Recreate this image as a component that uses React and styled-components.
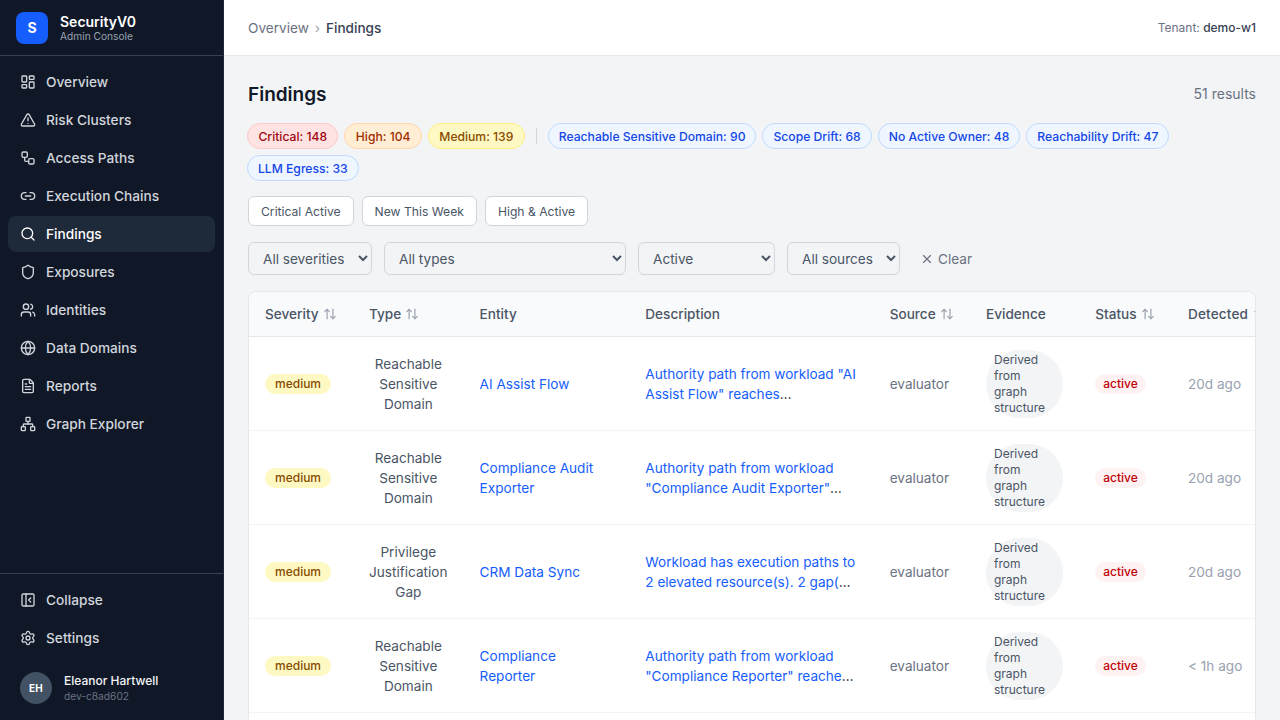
import React from 'react';
import styled, { createGlobalStyle } from 'styled-components';
import {
  LayoutDashboard, TriangleAlert, Workflow, Link2, Search, Shield, Users, Globe,
  FileText, Network, PanelLeftClose, Settings, ArrowUpDown, X,
} from 'lucide-react';

const Global = createGlobalStyle`
  * { box-sizing: border-box; }
  html, body { margin: 0; height: 100%; overflow: hidden; }
  body { font-family: Inter, "Liberation Sans", sans-serif; background: #f3f4f6; color: #101828; }
`;

const Shell = styled.div`display: flex; height: 100vh; overflow: hidden;`;

const Sidebar = styled.aside`
  width: 224px; flex: none; display: flex; flex-direction: column;
  background: #101828; border-right: 1px solid #1e2939;
`;
const Brand = styled.div`
  height: 56px; flex: none; display: flex; align-items: center; gap: 12px; padding: 0 16px;
  border-bottom: 1px solid #364153;
`;
const Logo = styled.div`
  width: 32px; height: 32px; border-radius: 8px; background: #155dfc; color: #fff;
  display: flex; align-items: center; justify-content: center; font-size: 14px; font-weight: 700;
`;
const BrandText = styled.div`display: flex; flex-direction: column;`;
const BrandName = styled.span`font-size: 14px; line-height: 16px; font-weight: 600; color: #fff;`;
const BrandSub = styled.span`font-size: 10.2px; line-height: 12px; color: #99a1af;`;
const Nav = styled.nav`flex: 1; display: flex; flex-direction: column; gap: 2px; padding: 8px 8px 0 8px;`;
const NavItem = styled.a`
  height: 36px; display: flex; align-items: center; gap: 10px; padding: 0 12px; border-radius: 8px;
  font-size: 13.7px; font-weight: 500; color: ${p => (p.$active ? '#fff' : '#d1d5dc')};
  background: ${p => (p.$active ? '#1e2939' : 'transparent')};
  svg { flex: none; }
`;
const SideFoot = styled.div`
  border-top: 1px solid #364153; padding: 8px 8px 16px; display: flex; flex-direction: column; gap: 2px;
`;
const UserRow = styled.div`display: flex; align-items: center; gap: 12px; padding: 0 12px; margin-top: 14px;`;
const Avatar = styled.div`
  width: 32px; height: 32px; border-radius: 50%; background: #425264; color: #fff;
  display: flex; align-items: center; justify-content: center; font-size: 10px; font-weight: 700; letter-spacing: .2px;
`;
const UserText = styled.div`display: flex; flex-direction: column;`;
const UserName = styled.span`font-size: 12px; line-height: 16px; font-weight: 500; color: #f3f4f6;`;
const UserId = styled.span`font-size: 10.2px; line-height: 14px; color: #6a7282;`;

const Main = styled.div`flex: 1; min-width: 0; display: flex; flex-direction: column;`;
const TopBar = styled.header`
  height: 56px; flex: none; background: #fff; border-bottom: 1px solid #e5e7eb;
  display: flex; align-items: center; justify-content: space-between; padding: 0 24px;
`;
const Crumbs = styled.div`display: flex; align-items: center; gap: 6px; font-size: 13.6px; color: #6a7282;`;
const CrumbSep = styled.span`color: #99a1af; font-size: 13.6px;`;
const CrumbNow = styled.span`color: #364153; font-weight: 500;`;
const Tenant = styled.div`font-size: 12px; color: #6a7282;`;
const TenantName = styled.span`color: #364153; font-weight: 500;`;

const Content = styled.main`flex: 1; min-height: 0; overflow: hidden; padding: 24px;`;
const TitleRow = styled.div`display: flex; align-items: center; justify-content: space-between; height: 28px; margin-bottom: 15px;`;
const Title = styled.h1`margin: 0; padding-top: 2px; font-size: 19px; line-height: 28px; font-weight: 600; color: #101828;`;
const Count = styled.span`padding-bottom: 2px; font-size: 14px; color: #6a7282;`;

const Chips = styled.div`display: flex; flex-wrap: wrap; align-items: center; gap: 6px; margin-left: -1px; margin-bottom: 15px;`;
const tones = {
  critical: ['#ffe2e2', '#ffc9c9', '#9f0712'],
  high: ['#ffedd4', '#ffd6a8', '#9f2d00'],
  medium: ['#fef9c2', '#fff085', '#894b00'],
  type: ['#eff6ff', '#bedbff', '#1447e6'],
};
const Chip = styled.span`
  height: 26px; display: inline-flex; align-items: center; border-radius: 999px;
  padding: 0 ${p => (p.$tone === 'type' ? 10 : 10.4)}px;
  font-size: 12.15px; font-weight: 500; white-space: nowrap;
  border: 1px solid ${p => tones[p.$tone][1]};
  background: ${p => tones[p.$tone][0]}; color: ${p => tones[p.$tone][2]};
`;
const ChipDivider = styled.span`width: 1px; height: 16px; background: #d1d5dc; margin: 0 5px;`;

const Presets = styled.div`display: flex; gap: 8px; margin-bottom: 16px;`;
const Preset = styled.button`
  height: 30px; padding: 0 12px; background: #fff; border: 1px solid #d1d5dc; border-radius: 6px;
  font: 400 12.15px Inter, sans-serif; color: #4a5565;
`;
const Filters = styled.div`display: flex; align-items: center; gap: 12px; margin-bottom: 16px;`;
const Select = styled.select`
  height: 33px; width: ${p => p.$w}px; padding: 0 8px 0 10px; background: #f3f4f6; border: 1px solid #d1d5dc; border-radius: 6px;
  font: 400 13.6px Inter, sans-serif; color: #4a5565;
`;
const ClearBtn = styled.button`
  display: inline-flex; align-items: center; gap: 4px; background: none; border: 0; padding: 0 8px;
  font: 400 13.6px Inter, sans-serif; color: #6a7282;
`;

const TableCard = styled.div`
  background: #fff; border: 1px solid #e5e7eb; border-radius: 8px; overflow: hidden;
`;
const Table = styled.table`
  border-collapse: collapse; table-layout: fixed; width: 1043.3px; font-size: 13.6px;
`;
const Head = styled.th`
  width: ${p => p.$w}px; height: 44px; padding: 0 16px; text-align: left; background: #f9fafb;
  border-bottom: 1px solid #e5e7eb; font-weight: 500; color: #4a5565; white-space: nowrap;
`;
const HeadInner = styled.span`
  display: inline-flex; align-items: center; gap: ${p => (p.$sorted ? 5 : 4)}px;
  letter-spacing: ${p => (p.$sorted ? '.15px' : 'normal')};
  svg { color: #99a1af; flex: none; }
`;
const Row = styled.tr`border-bottom: 1px solid #f3f4f6;`;
const Cell = styled.td`
  height: 94px; padding: 13px 16px 11px; vertical-align: middle; line-height: 20px; color: #4a5565;
`;
const BadgeCell = styled(Cell)`padding: 12px 16px;`;
const TypeCell = styled(Cell)`text-align: center;`;
const MutedCell = styled(Cell)`color: #6a7282;`;
const AgeCell = styled(Cell)`color: #99a1af; white-space: nowrap;`;
const LinkText = styled.a`color: #155dfc;`;
const Clamp = styled.div`
  color: #101828; display: -webkit-box; -webkit-box-orient: vertical; -webkit-line-clamp: 2; overflow: hidden;
`;
const Badge = styled.span`
  display: inline-flex; align-items: center; height: 20px; padding: 0 ${p => (p.$kind === 'sev' ? 10 : 8)}px; border-radius: 999px;
  font-size: 12px; font-weight: 500; line-height: 16px;
  background: ${p => (p.$kind === 'sev' ? '#fef9c2' : '#fef2f2')}; color: ${p => (p.$kind === 'sev' ? '#894b00' : '#c10007')};
`;
const Evidence = styled.span`
  display: block; width: 77px; padding: 2px 8px; border-radius: 999px; background: #f3f4f6;
  font-size: 12px; line-height: 16px; font-weight: 400; color: #4a5565;
`;

const navItems = [
  ['Overview', LayoutDashboard], ['Risk Clusters', TriangleAlert], ['Access Paths', Workflow],
  ['Execution Chains', Link2], ['Findings', Search], ['Exposures', Shield], ['Identities', Users],
  ['Data Domains', Globe], ['Reports', FileText], ['Graph Explorer', Network],
];
const typeChips = ['Reachable Sensitive Domain: 90', 'Scope Drift: 68', 'No Active Owner: 48', 'Reachability Drift: 47', 'LLM Egress: 33'];
const columns = [
  ['Severity', 104, true], ['Type', 110.6, true], ['Entity', 165.7, false], ['Description', 244.4, false],
  ['Source', 96.3, true], ['Evidence', 109.3, false], ['Status', 92.7, true], ['Detected', 120.3, true],
];
const rows = [
  ['Reachable Sensitive Domain', 'AI Assist Flow', 'Authority path from workload "AI Assist Flow" reaches customer_records_domain through a delegated path', '20d ago'],
  ['Reachable Sensitive Domain', 'Compliance Audit Exporter', 'Authority path from workload "Compliance Audit Exporter" reaches sensitive domain through a delegated path', '20d ago'],
  ['Privilege Justification Gap', 'CRM Data Sync', 'Workload has execution paths to 2 elevated resource(s). 2 gap(s) found without a justification', '20d ago'],
  ['Reachable Sensitive Domain', 'Compliance Reporter', 'Authority path from workload "Compliance Reporter" reaches sensitive domain through a delegated path', '< 1h ago'],
  ['Reachable Sensitive Domain', 'Support Copilot', 'Authority path from workload "Support Copilot" reaches sensitive domain through a delegated path', '< 1h ago'],
];

export default function App() {
  return (
    <Shell>
      <Global />
      <Sidebar>
        <Brand>
          <Logo>S</Logo>
          <BrandText>
            <BrandName>SecurityV0</BrandName>
            <BrandSub>Admin Console</BrandSub>
          </BrandText>
        </Brand>
        <Nav>
          {navItems.map(([label, Icon]) => (
            <NavItem key={label} $active={label === 'Findings'}><Icon size={16} />{label}</NavItem>
          ))}
        </Nav>
        <SideFoot>
          <NavItem><PanelLeftClose size={16} />Collapse</NavItem>
          <NavItem><Settings size={16} />Settings</NavItem>
          <UserRow>
            <Avatar>EH</Avatar>
            <UserText>
              <UserName>Eleanor Hartwell</UserName>
              <UserId>dev-c8ad602</UserId>
            </UserText>
          </UserRow>
        </SideFoot>
      </Sidebar>
      <Main>
        <TopBar>
          <Crumbs>Overview<CrumbSep>›</CrumbSep><CrumbNow>Findings</CrumbNow></Crumbs>
          <Tenant>Tenant: <TenantName>demo-w1</TenantName></Tenant>
        </TopBar>
        <Content>
          <TitleRow><Title>Findings</Title><Count>51 results</Count></TitleRow>
          <Chips>
            <Chip $tone="critical">Critical: 148</Chip>
            <Chip $tone="high">High: 104</Chip>
            <Chip $tone="medium">Medium: 139</Chip>
            <ChipDivider />
            {typeChips.map(t => <Chip key={t} $tone="type">{t}</Chip>)}
          </Chips>
          <Presets>
            <Preset>Critical Active</Preset>
            <Preset>New This Week</Preset>
            <Preset>High &amp; Active</Preset>
          </Presets>
          <Filters>
            <Select $w={124}><option>All severities</option></Select>
            <Select $w={242}><option>All types</option></Select>
            <Select $w={137}><option>Active</option></Select>
            <Select $w={113}><option>All sources</option></Select>
            <ClearBtn><X size={14} />Clear</ClearBtn>
          </Filters>
          <TableCard>
            <Table>
              <thead>
                <tr>
                  {columns.map(([label, w, sort]) => (
                    <Head key={label} $w={w}>
                      <HeadInner $sorted={label === 'Detected'}>{label}{sort && <ArrowUpDown size={14} />}</HeadInner>
                    </Head>
                  ))}
                </tr>
              </thead>
              <tbody>
                {rows.map(([type, entity, desc, age]) => (
                  <Row key={entity}>
                    <BadgeCell><Badge $kind="sev">medium</Badge></BadgeCell>
                    <TypeCell>{type}</TypeCell>
                    <Cell><LinkText>{entity}</LinkText></Cell>
                    <Cell><Clamp><LinkText>{desc}</LinkText></Clamp></Cell>
                    <MutedCell>evaluator</MutedCell>
                    <Cell><Evidence>Derived from graph structure</Evidence></Cell>
                    <BadgeCell><Badge $kind="status">active</Badge></BadgeCell>
                    <AgeCell>{age}</AgeCell>
                  </Row>
                ))}
              </tbody>
            </Table>
          </TableCard>
        </Content>
      </Main>
    </Shell>
  );
}
